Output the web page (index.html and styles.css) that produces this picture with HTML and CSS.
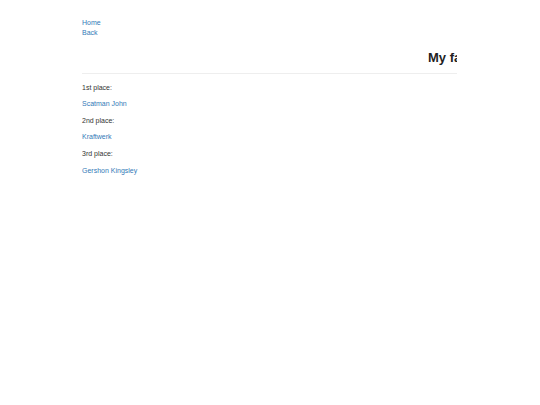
FILE: index.html
```html
<!DOCTYPE html>
<html lang="en">
<head>
<meta charset="utf-8">
<title>My favorite artists</title>
<link rel="stylesheet" href="styles.css">
</head>
<body>
<div class="container">
  <nav class="nav">
    <a href="#">Home</a>
    <a href="#">Back</a>
  </nav>
  <header class="page-header">
    <h1 class="title">My favorite artists of all time</h1>
  </header>
  <div class="ranking">
    <p class="label">1st place:</p>
    <p><a href="#">Scatman John</a></p>
    <p class="label">2nd place:</p>
    <p><a href="#">Kraftwerk</a></p>
    <p class="label">3rd place:</p>
    <p><a href="#">Gershon Kingsley</a></p>
  </div>
</div>
</body>
</html>
```
FILE: styles.css
```css
html, body {
  margin: 0;
  padding: 0;
  background: #fff;
}
body {
  font-family: "Liberation Sans", Arial, sans-serif;
  font-size: 7px;
  line-height: 10px;
  color: #333;
}
a {
  color: #337ab7;
  text-decoration: none;
}
.container {
  width: 375px;
  margin: 0 0 0 82px;
  padding-top: 17.7px;
}
.nav {
  display: flex;
  flex-direction: column;
  align-items: flex-start;
}
.page-header {
  margin-top: 12.8px;
  padding-bottom: 7.5px;
  border-bottom: 1px solid #eee;
  overflow: hidden;
}
.title {
  margin: 0;
  padding-left: 346px;
  font-size: 13px;
  line-height: 15px;
  font-weight: bold;
  color: #222;
  white-space: nowrap;
}
.ranking {
  padding-top: 8.7px;
}
.ranking p {
  margin: 0 0 6.6px;
}
```
